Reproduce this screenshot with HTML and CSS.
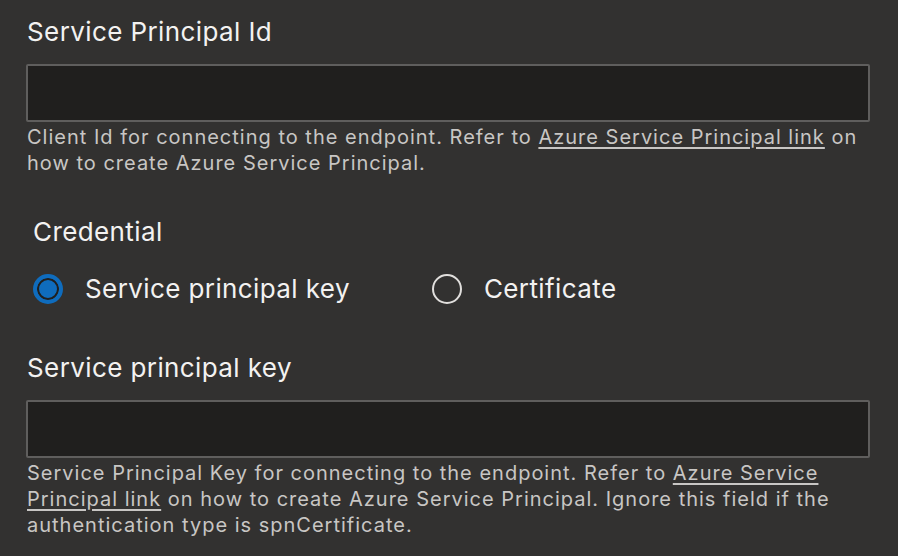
FILE: index.html
```html
<!DOCTYPE html>
<html lang="en">
<head>
  <meta charset="UTF-8" />
  <title>Service connection</title>
  <link rel="stylesheet" href="styles.css">
</head>
<body>

  <div class="field">
    <label class="field-label">Service Principal Id</label>
    <input class="text-input" type="text" />
    <p class="help">Client Id for connecting to the endpoint. Refer to <a href="#">Azure Service Principal link</a> on how to create Azure Service Principal.</p>
  </div>

  <div class="group">
    <div class="group-label">Credential</div>
    <div class="radios">
      <label class="radio">
        <span class="dot checked"></span>
        <span>Service principal key</span>
      </label>
      <label class="radio">
        <span class="dot"></span>
        <span>Certificate</span>
      </label>
    </div>
  </div>

  <div class="field">
    <label class="field-label">Service principal key</label>
    <input class="text-input" type="text" />
    <p class="help">Service Principal Key for connecting to the endpoint. Refer to <a href="#">Azure Service Principal link</a> on how to create Azure Service Principal. Ignore this field if the authentication type is spnCertificate.</p>
  </div>

</body>
</html>
```

FILE: styles.css
```css
* {
  margin: 0;
  padding: 0;
  box-sizing: border-box;
}

body {
  font-family: 'Inter', 'Noto Sans', sans-serif;
  background: #323130;
  color: #f3f2f1;
  padding: 14px 28px 0 26px;
  height: 556px;
  overflow: hidden;
}

.field-label {
  display: block;
  font-size: 26px;
  letter-spacing: 0.4px;
  line-height: 36px;
  padding-left: 1px;
  margin-bottom: 14px;
}

.text-input {
  display: block;
  width: 100%;
  height: 58px;
  background: #201f1e;
  border: 2px solid #5f5e5d;
  border-radius: 2px;
  color: #f3f2f1;
  outline: none;
}

.help {
  font-size: 20px;
  letter-spacing: 1px;
  line-height: 26px;
  color: #c8c6c4;
  padding-left: 1px;
  margin-top: 2px;
}

.help a {
  color: #c8c6c4;
  text-decoration: underline;
  text-underline-offset: 3px;
}

.group {
  padding: 38px 0 45px 7px;
}

.group-label {
  font-size: 26px;
  letter-spacing: 0.4px;
  line-height: 36px;
  margin-bottom: 23px;
}

.radios {
  display: flex;
  gap: 82px;
}

.radio {
  display: flex;
  align-items: center;
  gap: 22px;
  font-size: 26px;
  letter-spacing: 0.4px;
  line-height: 32px;
}

.dot {
  width: 30px;
  height: 30px;
  border-radius: 50%;
  border: 2px solid #e1dfdd;
}

.dot.checked {
  border: 4px solid #0f6cbd;
  background: #0f6cbd;
  box-shadow: inset 0 0 0 2px #201f1e;
}
```
